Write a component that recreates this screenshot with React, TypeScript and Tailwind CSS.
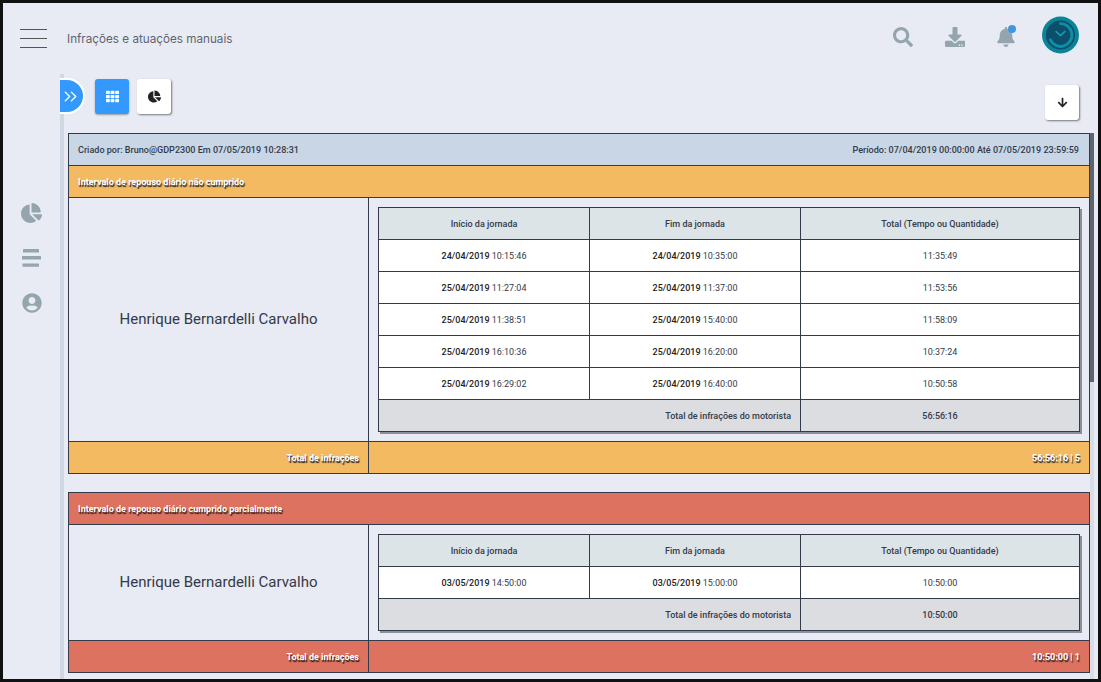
import React from 'react';
import { FaBell, FaChartPie, FaDownload, FaSearch, FaTh, FaUserCircle, FaArrowDown } from 'react-icons/fa';
import { ChevronsRight } from 'lucide-react';

type Row = { start: string; startTime: string; end: string; endTime: string; total: string };

interface GroupProps {
  title: string;
  color: string;
  rows: Row[];
  driverTotal: string;
  groupTotal: string;
}

const shadowText = 'text-white font-bold [text-shadow:1px_2px_1px_#222]';
const cell = 'border border-[#333a4a] pt-[2px]';

const firstGroup: Row[] = [
  { start: '24/04/2019', startTime: '10:15:46', end: '24/04/2019', endTime: '10:35:00', total: '11:35:49' },
  { start: '25/04/2019', startTime: '11:27:04', end: '25/04/2019', endTime: '11:37:00', total: '11:53:56' },
  { start: '25/04/2019', startTime: '11:38:51', end: '25/04/2019', endTime: '15:40:00', total: '11:58:09' },
  { start: '25/04/2019', startTime: '16:10:36', end: '25/04/2019', endTime: '16:20:00', total: '10:37:24' },
  { start: '25/04/2019', startTime: '16:29:02', end: '25/04/2019', endTime: '16:40:00', total: '10:50:58' },
];

const secondGroup: Row[] = [
  { start: '03/05/2019', startTime: '14:50:00', end: '03/05/2019', endTime: '15:00:00', total: '10:50:00' },
];

const Group: React.FC<GroupProps> = ({ title, color, rows, driverTotal, groupTotal }) => (
  <div className="flex flex-col">
    <div className={`h-[33px] flex items-center px-[9px] pt-[2px] border border-[#333a4a] ${color} ${shadowText}`}>{title}</div>
    <div className="flex border-x border-[#333a4a]">
      <div className="w-[300px] shrink-0 flex items-center justify-center border-r border-[#333a4a] text-[15px] text-[#333a4a]">
        Henrique Bernardelli Carvalho
      </div>
      <div className="flex-1 p-[9px]">
        <table className="w-[702px] table-fixed border-collapse text-center shadow-[2px_2px_0_#8a8f98] bg-white">
          <thead>
            <tr className="h-[32px] bg-[#dde4e8] text-[#333a4a]">
              <th className={`w-[211px] font-medium ${cell}`}>Início da jornada</th>
              <th className={`w-[211px] font-medium ${cell}`}>Fim da jornada</th>
              <th className={`font-medium ${cell}`}>Total (Tempo ou Quantidade)</th>
            </tr>
          </thead>
          <tbody>
            {rows.map((row, index) => (
              <tr key={index} className="h-[32px]">
                <td className={cell}><span className="font-medium text-[#222]">{row.start}</span> {row.startTime}</td>
                <td className={cell}><span className="font-medium text-[#222]">{row.end}</span> {row.endTime}</td>
                <td className={cell}>{row.total}</td>
              </tr>
            ))}
            <tr className="h-[32px] bg-[#dcdde1] font-medium text-[#333a4a]">
              <td colSpan={2} className={`text-right pr-[9px] ${cell}`}>Total de infrações do motorista</td>
              <td className={cell}>{driverTotal}</td>
            </tr>
          </tbody>
        </table>
      </div>
    </div>
    <div className={`h-[33px] flex items-center border border-[#333a4a] ${color} ${shadowText}`}>
      <div className="w-[300px] h-full shrink-0 flex items-center justify-end pr-[9px] pt-[2px] border-r border-[#333a4a]">Total de infrações</div>
      <div className="flex-1 text-right pr-[9px] pt-[2px]">{groupTotal}</div>
    </div>
  </div>
);

export default function App() {
  return (
    <div className="w-[1101px] h-[682px] overflow-hidden border-[3px] border-[#111] bg-[#e8ebf3] flex flex-col font-['Roboto',sans-serif]">
      <header className="h-[71px] shrink-0 flex items-center">
        <div className="ml-[17px] w-[27px] flex flex-col gap-[8px]">
          <div className="h-px bg-[#555]" />
          <div className="h-px bg-[#555]" />
          <div className="h-px bg-[#555]" />
        </div>
        <div className="ml-[20px] pt-[2px] text-[11.7px] text-[#5f6470] font-['Inter',sans-serif]">Infrações e atuações manuais</div>
        <div className="ml-auto h-full flex items-start text-[#94a5ae]">
          <FaSearch className="mt-[24px] w-[20px] h-[20px]" />
          <FaDownload className="mt-[24px] ml-[32px] w-[20px] h-[20px]" />
          <div className="relative mt-[24px] ml-[32px]">
            <FaBell className="w-[18px] h-[20px]" />
            <div className="absolute -top-[2px] right-[-1px] w-[8px] h-[8px] rounded-full bg-[#3f97e0]" />
          </div>
          <svg viewBox="0 0 38 38" className="mt-[13px] ml-[27px] mr-[19px] w-[37px] h-[38px]">
            <circle cx="19" cy="19" r="19" fill="#0a8496" />
            <circle cx="19" cy="19" r="15" fill="#0b4f6c" />
            <path d="M19 7.3A11.7 11.7 0 1 1 8.5 24" fill="none" stroke="#0e90a4" strokeWidth="3" strokeLinecap="round" />
            <path d="M14 15l5 4.5 5-4.5" fill="none" stroke="#1b9fb2" strokeWidth="1.6" />
          </svg>
        </div>
      </header>
      <div className="flex-1 flex min-h-0">
        <aside className="w-[57px] shrink-0 flex flex-col items-center pt-[129px] gap-[26px] text-[#94a5ae]">
          <FaChartPie className="w-[21px] h-[20px]" />
          <svg viewBox="0 0 19 18" className="w-[19px] h-[18px]" fill="currentColor">
            <rect x="1" y="0" width="16" height="3.4" rx="0.5" />
            <rect x="0" y="7" width="19" height="3.4" rx="0.5" />
            <rect x="0.5" y="14.4" width="16.5" height="3.4" rx="0.5" />
          </svg>
          <FaUserCircle className="w-[20px] h-[20px]" />
        </aside>
        <main className="flex-1 min-w-0 border-l-[4px] border-[#d0d9e3] flex flex-col relative">
          <div className="h-[59px] shrink-0 flex items-start pt-[5px] relative">
            <div className="w-[23px] h-[32px] -mt-px rounded-r-full bg-[#3399ff] border-y-2 border-r-2 border-white -ml-[4px] flex items-center text-white box-content">
              <ChevronsRight className="w-[21px] h-[21px]" strokeWidth={1.6} />
            </div>
            <button className="ml-[10px] w-[34px] h-[35px] rounded-[3px] bg-[#3399ff] flex items-center justify-center text-white shadow-[0_1px_2px_#999]">
              <FaTh className="w-[13px] h-[13px]" />
            </button>
            <button className="ml-[8px] w-[34px] h-[35px] rounded-[3px] bg-white flex items-center justify-center text-[#222] shadow-[1px_1px_2px_#777]">
              <FaChartPie className="w-[13px] h-[13px]" />
            </button>
            <button className="ml-auto mr-[19px] mt-[6px] w-[34px] h-[35px] rounded-[3px] bg-white flex items-center justify-center text-[#222] shadow-[1px_1px_2px_#777]">
              <FaArrowDown className="w-[11px] h-[11px]" />
            </button>
          </div>
          <div className="flex-1 min-h-0 flex pl-[4px] pr-[4px]">
            <div className="flex-1 min-w-0 overflow-hidden text-[9px] text-[#333a4a]">
              <div className="h-[33px] flex items-center justify-between pl-[9px] pr-[10px] pt-[2px] border border-[#333a4a] bg-[#c9d6e5] font-medium text-[9.05px]">
                <span>Criado por: Bruno@GDP2300 Em 07/05/2019 10:28:31</span>
                <span>Período: 07/04/2019 00:00:00 Até 07/05/2019 23:59:59</span>
              </div>
              <div className="-mt-px flex flex-col gap-[18px]">
                <Group title="Intervalo de repouso diário não cumprido" color="bg-[#f4ba62]" rows={firstGroup} driverTotal="56:56:16" groupTotal="56:56:16 | 5" />
                <Group title="Intervalo de repouso diário cumprido parcialmente" color="bg-[#dc725f]" rows={secondGroup} driverTotal="10:50:00" groupTotal="10:50:00 | 1" />
              </div>
            </div>
            <div className="w-[4px] shrink-0 bg-[#d9dde5]">
              <div className="h-[249px] bg-[#5c6470]" />
            </div>
          </div>
        </main>
      </div>
    </div>
  );
}
